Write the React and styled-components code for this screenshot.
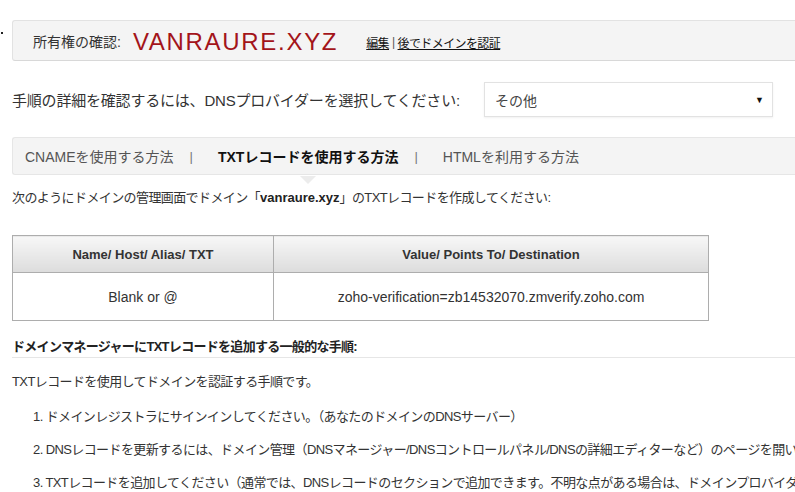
import React from 'react';
import styled, { createGlobalStyle } from 'styled-components';

const GlobalStyle = createGlobalStyle`
  html, body {
    margin: 0;
    padding: 0;
    background: #fff;
    overflow: hidden;
  }
  body {
    font-family: "Liberation Sans", Arial, "Noto Sans CJK JP", sans-serif;
    color: #333;
  }
`;

const steps = [
  '1. ドメインレジストラにサインインしてください。（あなたのドメインのDNSサーバー）',
  '2. DNSレコードを更新するには、ドメイン管理（DNSマネージャー/DNSコントロールパネル/DNSの詳細エディターなど）のページを開いてください。',
  '3. TXTレコードを追加してください（通常では、DNSレコードのセクションで追加できます。不明な点がある場合は、ドメインプロバイダーにお問い合わせください）。',
];

const tabs = [
  { label: 'CNAMEを使用する方法', active: false },
  { label: 'TXTレコードを使用する方法', active: true },
  { label: 'HTMLを利用する方法', active: false },
];

function App() {
  return (
    <Page>
      <GlobalStyle />
      <HeaderRow>
        <Dot />
        <HeaderBar>
          <HeaderLabel>所有権の確認:</HeaderLabel>
          <DomainName>VANRAURE.XYZ</DomainName>
          <HeaderLinks>
            <LinkText>編集</LinkText>
            <Sep>|</Sep>
            <LinkText>後でドメインを認証</LinkText>
          </HeaderLinks>
        </HeaderBar>
      </HeaderRow>

      <ProviderRow>
        <ProviderLabel>手順の詳細を確認するには、DNSプロバイダーを選択してください:</ProviderLabel>
        <SelectBox>
          <span>その他</span>
          <Caret>▼</Caret>
        </SelectBox>
      </ProviderRow>

      <TabBar>
        {tabs.map((tab, i) => (
          <React.Fragment key={tab.label}>
            {i > 0 && <TabSep>|</TabSep>}
            <Tab active={tab.active}>{tab.label}</Tab>
          </React.Fragment>
        ))}
      </TabBar>

      <Description>
        次のようにドメインの管理画面でドメイン「<b>vanraure.xyz</b>」のTXTレコードを作成してください:
      </Description>

      <RecordTable>
        <thead>
          <tr>
            <HeadCell width="260">Name/ Host/ Alias/ TXT</HeadCell>
            <HeadCell>Value/ Points To/ Destination</HeadCell>
          </tr>
        </thead>
        <tbody>
          <tr>
            <BodyCell>Blank or @</BodyCell>
            <BodyCell>zoho-verification=zb14532070.zmverify.zoho.com</BodyCell>
          </tr>
        </tbody>
      </RecordTable>

      <SectionTitle>ドメインマネージャーにTXTレコードを追加する一般的な手順:</SectionTitle>
      <Intro>TXTレコードを使用してドメインを認証する手順です。</Intro>
      <StepList>
        {steps.map(step => (
          <Step key={step}>{step}</Step>
        ))}
      </StepList>
    </Page>
  );
}

export default App;

const Page = styled.div`
  width: 795px;
  height: 492px;
  padding: 20px 0 0 12px;
  box-sizing: border-box;
  overflow: hidden;
  white-space: nowrap;
`;

const HeaderRow = styled.div`
  display: flex;
  align-items: flex-start;
  margin-left: -11px;
`;

const Dot = styled.span`
  width: 2px;
  height: 2px;
  margin-top: 12px;
  margin-right: 9px;
  background: #222;
`;

const HeaderBar = styled.div`
  flex: 1;
  display: flex;
  align-items: center;
  height: 41px;
  box-sizing: border-box;
  padding-left: 20px;
  background: #f4f4f4;
  border: 1px solid #e2e2e2;
  border-right: none;
  border-bottom-color: #d8d8d8;
  border-radius: 3px 0 0 3px;
`;

const HeaderLabel = styled.span`
  font-size: 14px;
  color: #333;
  margin-right: 12px;
`;

const DomainName = styled.span`
  font-size: 24px;
  letter-spacing: 1.7px;
  color: #a3141a;
  margin-right: 28px;
  margin-top: 2px;
`;

const HeaderLinks = styled.span`
  font-size: 12px;
  letter-spacing: -0.6px;
  color: #111;
  display: flex;
  align-items: center;
  margin-top: 3px;
`;

const LinkText = styled.span`
  text-decoration: underline;
  cursor: pointer;
`;

const Sep = styled.span`
  margin: 0 3px;
  color: #555;
`;

const ProviderRow = styled.div`
  display: flex;
  align-items: center;
  margin-top: 21px;
`;

const ProviderLabel = styled.span`
  font-size: 15px;
  letter-spacing: -0.2px;
  color: #333;
  width: 472px;
`;

const SelectBox = styled.div`
  width: 289px;
  height: 35px;
  box-sizing: border-box;
  display: flex;
  align-items: center;
  justify-content: space-between;
  padding: 0 8px 0 10px;
  border: 1px solid #e2e2e2;
  box-shadow: 0 1px 2px rgba(0, 0, 0, 0.06);
  background: #fff;
  font-size: 14px;
  color: #444;
`;

const Caret = styled.span`
  font-size: 9px;
  color: #111;
`;

const TabBar = styled.div`
  display: flex;
  align-items: center;
  height: 38px;
  box-sizing: border-box;
  margin-top: 20px;
  padding-left: 12px;
  background: #f4f4f4;
  border: 1px solid #e6e6e6;
  border-right: none;
  border-radius: 3px 0 0 3px;
`;

const Tab = styled.span`
  position: relative;
  font-size: 14px;
  font-weight: ${p => (p.active ? 'bold' : 'normal')};
  color: ${p => (p.active ? '#111' : '#555')};

  &::after {
    content: '';
    display: ${p => (p.active ? 'block' : 'none')};
    position: absolute;
    left: 50%;
    bottom: -18px;
    margin-left: -8px;
    border-left: 8px solid transparent;
    border-right: 8px solid transparent;
    border-top: 8px solid #ececec;
  }
`;

const TabSep = styled.span`
  font-size: 13px;
  color: #777;
  margin: 0 25px 0 16px;
`;

const Description = styled.p`
  margin: 12px 0 0;
  font-size: 13px;
  letter-spacing: -0.6px;
  color: #333;

  b {
    color: #222;
    letter-spacing: 0;
  }
`;

const RecordTable = styled.table`
  margin-top: 29px;
  width: 697px;
  border-collapse: collapse;
  border: 1px solid #adadad;
`;

const HeadCell = styled.th`
  height: 36px;
  padding: 0;
  font-size: 13px;
  font-weight: bold;
  color: #333;
  background: linear-gradient(#f7f7f7, #dcdcdc);
  border: 1px solid #adadad;
`;

const BodyCell = styled.td`
  height: 47px;
  padding: 0;
  text-align: center;
  font-size: 14px;
  color: #333;
  border: 1px solid #adadad;
`;

const SectionTitle = styled.h3`
  margin: 18px 0 0;
  padding-bottom: 2px;
  font-size: 13px;
  line-height: 16px;
  font-weight: bold;
  letter-spacing: -0.7px;
  color: #222;
  border-bottom: 1px solid #e6e6e6;
`;

const Intro = styled.p`
  margin: 13px 0 0;
  font-size: 13px;
  letter-spacing: -0.6px;
  color: #333;
`;

const StepList = styled.ol`
  list-style: none;
  margin: 18px 0 0;
  padding-left: 21px;
`;

const Step = styled.li`
  font-size: 13px;
  line-height: 18px;
  letter-spacing: -0.6px;
  color: #333;
  margin-bottom: 15px;
`;
